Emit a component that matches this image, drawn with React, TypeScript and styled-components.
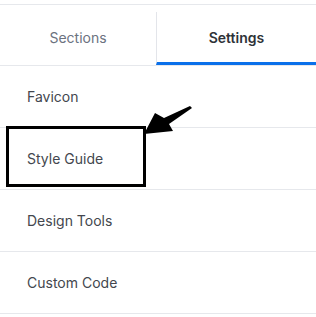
import React from "react";
import styled, { createGlobalStyle } from "styled-components";

const Global = createGlobalStyle`
  html, body {
    margin: 0;
    padding: 0;
    background: #fff;
  }
  body {
    font-family: Inter, "Liberation Sans", Arial, sans-serif;
  }
`;

const Panel = styled.div`
  position: relative;
  width: 316px;
  height: 317px;
  padding-top: 4px;
  box-sizing: border-box;
  overflow: hidden;
`;

const Tabs = styled.div`
  display: flex;
  align-items: flex-end;
  height: 60px;
  border-top: 1px solid #e6e8ec;
  border-bottom: 1px solid #e6e8ec;
`;

const Tab = styled.div<{ $active?: boolean }>`
  display: flex;
  align-items: center;
  justify-content: center;
  box-sizing: border-box;
  font-size: 14px;
  font-weight: ${(p) => (p.$active ? 600 : 400)};
  color: ${(p) => (p.$active ? "#2e3238" : "#6b7280")};
  flex: ${(p) => (p.$active ? "1 1 auto" : "0 0 156px")};
  height: ${(p) => (p.$active ? "53px" : "60px")};
  padding-top: ${(p) => (p.$active ? "0" : "4px")};
  border-left: ${(p) => (p.$active ? "1px solid #e3e5ea" : "none")};
  border-bottom: ${(p) => (p.$active ? "3px solid #0a70ea" : "none")};
`;

const List = styled.div`
  display: flex;
  flex-direction: column;
`;

const Row = styled.div`
  display: flex;
  align-items: center;
  height: 61px;
  padding-left: 27px;
  border-bottom: 1px solid #e6e8ec;
  font-size: 14px;
  color: #43474e;
`;

/* annotation overlays drawn on top of the panel */
const Highlight = styled.div`
  position: absolute;
  left: 6px;
  top: 126px;
  width: 140px;
  height: 61px;
  border: 3px solid #000;
  box-sizing: border-box;
`;

const Arrow = styled.svg`
  position: absolute;
  left: 140px;
  top: 104px;
`;

const items = ["Favicon", "Style Guide", "Design Tools", "Custom Code"];

export default function App() {
  return (
    <Panel>
      <Global />
      <Tabs>
        <Tab>Sections</Tab>
        <Tab $active>Settings</Tab>
      </Tabs>
      <List>
        {items.map((t) => (
          <Row key={t}>{t}</Row>
        ))}
      </List>
      <Highlight />
      <Arrow width="56" height="32" viewBox="0 0 56 32">
        <polygon
          points="4,30 15,9 24,14 50,2 52,4 29,20 33,27"
          fill="#000"
        />
      </Arrow>
    </Panel>
  );
}
